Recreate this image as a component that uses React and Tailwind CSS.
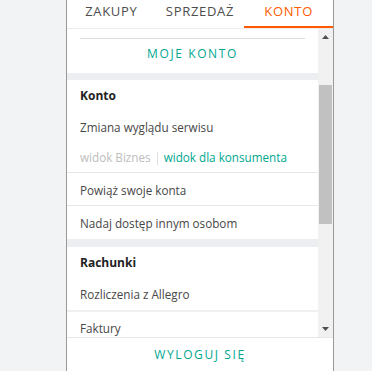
import React from 'react';

const font = "font-['Open_Sans',sans-serif]";

const Tab = ({ label, active }) => (
  <div
    className={`flex-1 flex justify-center pt-[2px] border-b-2 ${
      active ? 'border-[#ff5a00] text-[#ff5a00]' : 'border-transparent text-[#4d4d4d]'
    } text-[13px] leading-[18px] tracking-[0.7px] uppercase`}
  >
    {label}
  </div>
);

const Row = ({ children, last }) => (
  <div
    className={`h-[33px] pt-[3px] flex items-center px-[13px] text-[11.7px] text-[#474747] ${
      last ? '' : 'border-b border-[#e6e6e6]'
    }`}
  >
    {children}
  </div>
);

const Scrollbar = () => (
  <div className="w-[15px] bg-[#f1f1f1] flex flex-col">
    <div className="h-[16px] flex items-center justify-center">
      <svg width="7" height="4" viewBox="0 0 7 4">
        <path d="M0 4 L3.5 0 L7 4 Z" fill="#505050" />
      </svg>
    </div>
    <div className="flex-1 flex flex-col px-[1px]">
      <div className="h-[40px]" />
      <div className="h-[139px] bg-[#c1c1c1]" />
    </div>
    <div className="h-[16px] flex items-center justify-center">
      <svg width="7" height="4" viewBox="0 0 7 4">
        <path d="M0 0 L7 0 L3.5 4 Z" fill="#505050" />
      </svg>
    </div>
  </div>
);

export default function App() {
  return (
    <div className={`${font} bg-white min-h-[381px]`}>
      <div className="h-[371px] bg-[#f2f3f5]">
        <div className="ml-[66px] w-[268px] h-full bg-white border-x border-[#999] flex flex-col">
          <div className="flex h-[29px] border-b border-[#ececec]">
            <Tab label="Zakupy" />
            <Tab label="Sprzedaż" />
            <Tab label="Konto" active />
          </div>

          <div className="h-[308px] flex">
            <div className="flex-1 overflow-hidden">
              <div className="pt-[9px] px-[13px]">
                <div className="border-t border-[#dcdcdc]" />
              </div>
              <div className="h-[34px] pt-[7px] text-center text-[12px] leading-[16px] tracking-[1.6px] text-[#00a790]">
                MOJE KONTO
              </div>
              <div className="h-[7px] bg-[#eceef1]" />

              <div className="border-b border-[#e6e6e6]">
                <div className="h-[31px] pt-[1px] flex items-center px-[13px] text-[12px] font-bold text-[#222]">
                  Konto
                </div>
                <div className="h-[30px] pt-[3px] flex items-center px-[13px] text-[11.7px] text-[#474747]">
                  Zmiana wyglądu serwisu
                </div>
                <div className="h-[31px] pt-[3px] flex items-center px-[13px] text-[11.7px]">
                  <span className="text-[#bdbdbd]">widok Biznes</span>
                  <span className="mx-[6px] h-[13px] border-l border-[#e0e0e0]" />
                  <span className="text-[#00a790]">widok dla konsumenta</span>
                </div>
              </div>
              <Row>Powiąż swoje konta</Row>
              <Row last>Nadaj dostęp innym osobom</Row>
              <div className="h-[8px] bg-[#eceef1]" />

              <div className="h-[31px] pt-[1px] flex items-center px-[13px] text-[12px] font-bold text-[#222]">
                Rachunki
              </div>
              <div className="h-[32px] pt-[2px] flex items-center px-[13px] text-[11.7px] text-[#474747]">
                Rozliczenia z Allegro
              </div>
              <div className="h-[2px] bg-[#eef0f2]" />
              <div className="h-[26px] flex items-end px-[13px] text-[11.7px] text-[#474747]">
                Faktury
              </div>
            </div>
            <Scrollbar />
          </div>

          <div className="flex-1 flex items-center justify-center border-t border-[#e6e6e6] text-[12px] tracking-[1.6px] text-[#00a790]">
            WYLOGUJ SIĘ
          </div>
        </div>
      </div>
    </div>
  );
}
